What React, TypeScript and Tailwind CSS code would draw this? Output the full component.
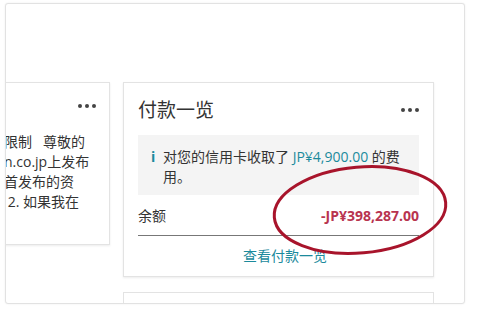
import React from "react";

const font = { fontFamily: '"Open Sans", "Noto Sans CJK SC", sans-serif' };

function Dots() {
  return (
    <div className="flex gap-[3px] items-center">
      <span className="w-[4px] h-[4px] rounded-full bg-[#444]" />
      <span className="w-[4px] h-[4px] rounded-full bg-[#444]" />
      <span className="w-[4px] h-[4px] rounded-full bg-[#444]" />
    </div>
  );
}

export default function App() {
  return (
    <div className="w-[478px] h-[315px] bg-white relative overflow-hidden" style={font}>
      <div className="absolute left-[5px] top-[3px] w-[460px] h-[301px] border border-[#e2e2e2] rounded-[3px] shadow-[0_0_2px_rgba(0,0,0,0.08)] overflow-hidden bg-white">
        <div className="flex gap-[13px] mt-[78px] ml-[-206px] items-start">
          {/* left card */}
          <div className="w-[310px] h-[163px] shrink-0 border border-[#e3e3e3] shadow-[0_1px_2px_rgba(0,0,0,0.08)] bg-white">
            <div className="flex justify-end pr-[13px] pt-[21px]">
              <Dots />
            </div>
            <div className="ml-[203px] mt-[24px] text-[14px] leading-[20px] text-[#333] whitespace-nowrap">
              <div>限制&nbsp;&nbsp;&nbsp;尊敬的</div>
              <div>n.co.jp上发布</div>
              <div>首发布的资</div>
              <div>&nbsp;2. 如果我在</div>
            </div>
          </div>
          {/* middle column */}
          <div className="w-[311px] shrink-0 flex flex-col gap-[15px]">
            <div className="h-[195px] border border-[#e3e3e3] shadow-[0_1px_2px_rgba(0,0,0,0.08)] bg-white px-[14px]">
              <div className="flex items-center justify-between h-[52px] pt-[2px]">
                <span className="text-[19px] text-[#333]">付款一览</span>
                <Dots />
              </div>
              <div className="bg-[#f4f4f4] pt-[12px] pb-[8px] pl-[13px] pr-[8px] flex text-[14px] leading-[20px] text-[#333]">
                <span className="text-[#1b8a9c] font-bold w-[12px] shrink-0">i</span>
                <span>
                  对您的信用卡收取了 <span className="text-[#1b8a9c]">JP¥4,900.00</span> 的费用。
                </span>
              </div>
              <div className="flex justify-between items-center h-[41px] border-b border-[#777] text-[14px]">
                <span className="text-[#333]">余额</span>
                <span className="font-bold text-[#b8344f]">-JP¥398,287.00</span>
              </div>
              <div className="text-center text-[14px] text-[#1b8a9c] pt-[9px] pl-[13px]">查看付款一览</div>
            </div>
            <div className="h-[40px] border border-[#e3e3e3] bg-white" />
          </div>
        </div>
      </div>
      <svg className="absolute left-0 top-0 pointer-events-none" width="478" height="315">
        <ellipse cx="360" cy="210" rx="86" ry="43" fill="none" stroke="#a8142b" strokeWidth="3" transform="rotate(-5 360 210)" />
      </svg>
    </div>
  );
}
